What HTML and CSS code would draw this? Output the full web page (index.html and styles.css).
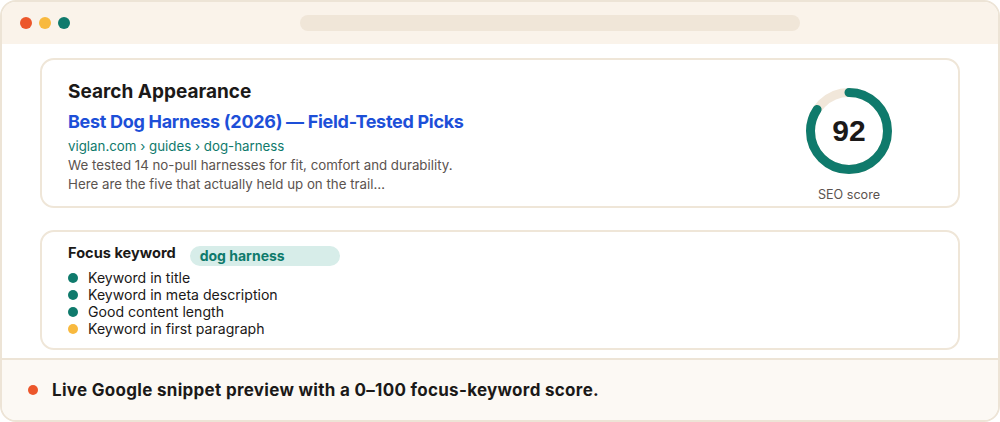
FILE: index.html
```html
<!DOCTYPE html>
<html lang="en">
<head>
<meta charset="utf-8">
<title>Search Appearance</title>
<link rel="stylesheet" href="styles.css">
</head>
<body>
<div class="window">
  <div class="titlebar">
    <div class="dots">
      <span class="dot dot-red"></span>
      <span class="dot dot-yellow"></span>
      <span class="dot dot-teal"></span>
    </div>
    <div class="urlbar"></div>
  </div>
  <div class="main">
    <section class="card card-snippet">
      <div class="snippet">
        <h2 class="heading">Search Appearance</h2>
        <div class="serp-title">Best Dog Harness (2026) — Field-Tested Picks</div>
        <div class="serp-url">viglan.com › guides › dog-harness</div>
        <p class="serp-desc">We tested 14 no-pull harnesses for fit, comfort and durability.<br>Here are the five that actually held up on the trail…</p>
      </div>
      <div class="score">
        <div class="ring">
          <svg width="86" height="86" viewBox="0 0 86 86">
            <circle cx="43" cy="43" r="38.5" fill="none" stroke="#f1e7da" stroke-width="9"/>
            <circle cx="43" cy="43" r="38.5" fill="none" stroke="#0f7a6c" stroke-width="9" stroke-linecap="round" stroke-dasharray="204 242" transform="rotate(-90 43 43)"/>
          </svg>
          <span class="ring-value">92</span>
        </div>
        <div class="score-label">SEO score</div>
      </div>
    </section>
    <section class="card card-keyword">
      <div class="kw-row">
        <h3 class="kw-heading">Focus keyword</h3>
        <span class="kw-pill">dog harness</span>
      </div>
      <ul class="checks">
        <li class="check"><span class="check-dot good"></span>Keyword in title</li>
        <li class="check"><span class="check-dot good"></span>Keyword in meta description</li>
        <li class="check"><span class="check-dot good"></span>Good content length</li>
        <li class="check"><span class="check-dot warn"></span>Keyword in first paragraph</li>
      </ul>
    </section>
  </div>
  <div class="footer">
    <span class="footer-dot"></span>
    <span class="footer-text">Live Google snippet preview with a 0–100 focus-keyword score.</span>
  </div>
</div>
</body>
</html>
```

FILE: styles.css
```css
* { box-sizing: border-box; }
html, body { margin: 0; padding: 0; background: #ffffff; }
body {
  font-family: Inter, "Noto Sans", "Liberation Sans", sans-serif;
  color: #1c1a19;
}
.window {
  width: 1000px;
  height: 422px;
  border: 2px solid #ede4d6;
  border-radius: 16px;
  overflow: hidden;
  display: flex;
  flex-direction: column;
  background: #ffffff;
}
.titlebar {
  height: 42px;
  flex: none;
  background: #faf3ea;
  display: flex;
  align-items: center;
  padding-left: 18px;
}
.dots { display: flex; gap: 7px; }
.dot { width: 12px; height: 12px; border-radius: 50%; display: block; }
.dot-red { background: #ec572b; }
.dot-yellow { background: #f8b93e; }
.dot-teal { background: #0f7a6c; }
.urlbar {
  margin-left: 230px;
  width: 500px;
  height: 16px;
  border-radius: 8px;
  background: #f0e6d8;
}
.main {
  flex: 1;
  padding: 14px 38px 8px 38px;
  display: flex;
  flex-direction: column;
  gap: 22px;
}
.card {
  border: 2px solid #efe6d8;
  border-radius: 14px;
  background: #fff;
}
.card-snippet {
  height: 150px;
  padding: 20px 66px 4px 26px;
  display: flex;
  justify-content: space-between;
  align-items: flex-start;
}
.heading {
  margin: 0;
  font-size: 19px;
  line-height: 24px;
  font-weight: 700;
  color: #1b1918;
}
.serp-title {
  margin-top: 6px;
  font-size: 18px;
  line-height: 24px;
  font-weight: 700;
  letter-spacing: -0.3px;
  color: #1d4fd8;
}
.serp-url {
  margin-top: 3px;
  font-size: 13.3px;
  line-height: 18px;
  color: #0f7a6c;
}
.serp-desc {
  margin: 1px 0 0 0;
  font-size: 13.3px;
  line-height: 19px;
  color: #5b534f;
}
.score {
  margin-top: 8px;
  display: flex;
  flex-direction: column;
  align-items: center;
  gap: 12px;
}
.ring {
  position: relative;
  width: 86px;
  height: 86px;
}
.ring svg { display: block; }
.ring-value {
  position: absolute;
  inset: 0;
  display: flex;
  align-items: center;
  justify-content: center;
  font-family: "Liberation Sans", Arial, sans-serif;
  font-weight: 700;
  font-size: 30px;
  color: #1b1918;
}
.score-label {
  font-size: 12.6px;
  line-height: 18px;
  color: #5b534f;
}
.card-keyword {
  height: 120px;
  padding: 11px 26px 10px 26px;
}
.kw-row {
  display: flex;
  align-items: flex-start;
  gap: 14px;
}
.kw-heading {
  margin: 0;
  font-size: 14.6px;
  line-height: 20px;
  font-weight: 700;
  color: #1b1918;
}
.kw-pill {
  margin-top: 3px;
  width: 150px;
  height: 20px;
  border-radius: 10px;
  background: #d7ede9;
  color: #0f7a6c;
  font-size: 14px;
  font-weight: 700;
  line-height: 20px;
  padding-left: 10px;
}
.checks {
  list-style: none;
  margin: 3px 0 0 0;
  padding: 0;
}
.check {
  display: flex;
  align-items: center;
  font-size: 14.1px;
  line-height: 17px;
  color: #1b1918;
}
.check-dot {
  width: 10px;
  height: 10px;
  border-radius: 50%;
  margin-right: 10px;
  flex: none;
}
.check-dot.good { background: #0f7a6c; }
.check-dot.warn { background: #f8b93e; }
.footer {
  height: 62px;
  flex: none;
  border-top: 2px solid #ede4d6;
  background: #fcf9f4;
  display: flex;
  align-items: center;
  padding-left: 26px;
}
.footer-dot {
  width: 10px;
  height: 10px;
  border-radius: 50%;
  background: #ec572b;
  margin-right: 14px;
}
.footer-text {
  font-size: 17px;
  font-weight: 700;
  letter-spacing: 0.3px;
  color: #1b1918;
}
```
